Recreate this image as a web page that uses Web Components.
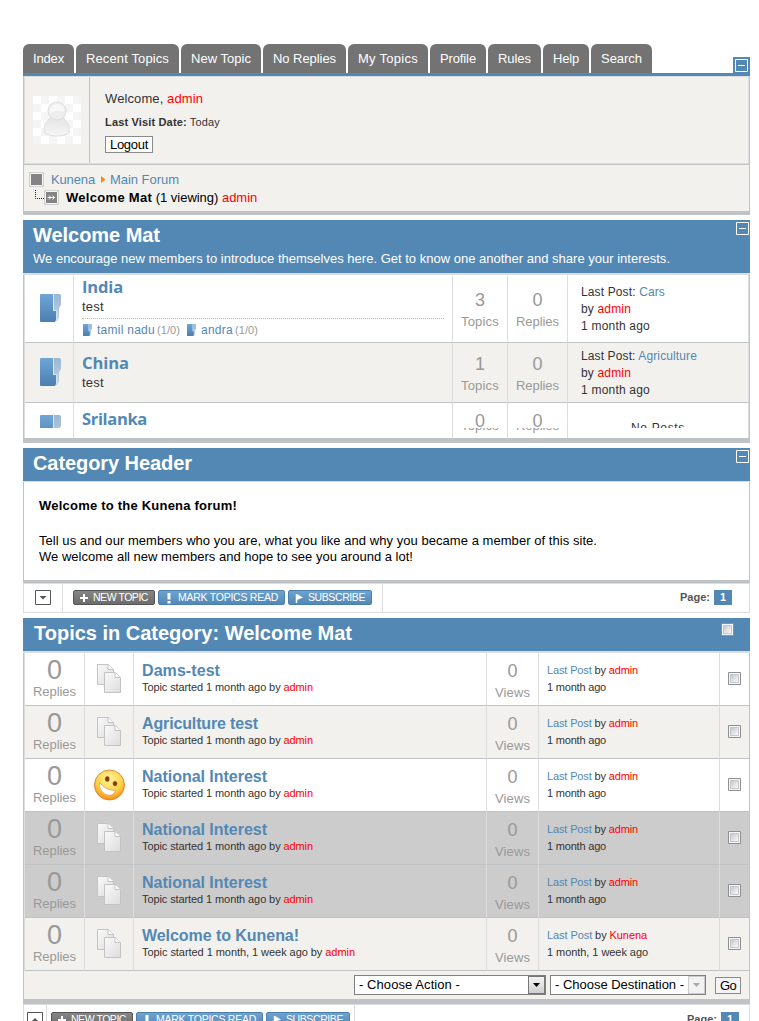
<!DOCTYPE html>
<html lang="en">
<head>
<meta charset="utf-8">
<title>Kunena - Welcome Mat</title>
<style>
html,body{margin:0;padding:0;background:#fff}
body{font:13px "Liberation Sans",Arial,sans-serif;color:#333;height:1021px;overflow:hidden}
</style>
</head>
<body>
<forum-page></forum-page>
<script>
const esc = 'a{color:#5388b4;text-decoration:none}i{color:#f00;font-style:normal}*{box-sizing:border-box}';
function make(name, render) {
  customElements.define(name, class extends HTMLElement {
    constructor() { super(); this.attachShadow({mode: 'open'}); }
    connectedCallback() { this.shadowRoot.innerHTML = render(this, n => this.getAttribute(n) || ''); }
  });
}

make('forum-page', () => `<style>${esc}
:host{display:block;width:727px;margin-left:23px;padding-top:44px;height:1021px;overflow:hidden;box-sizing:border-box}
.gap{height:5px}
.cat{border:solid #bfc3c6;border-width:0 1px 3px;height:101px;padding:15px 15px 0;color:#000}
.cat div{line-height:17px;height:16px}
.cat .b{font-weight:bold;margin-bottom:19px}
.list{border:solid #bfc3c6;border-width:0 1px 5px}
.foot{height:28px;background:#f2f1ed;display:flex;padding:4px 8px 0 330px;color:#000}
.sel{height:20px;border:1px solid #7f7f7f;background:#fff;display:flex;padding-left:4px;line-height:18px;justify-content:space-between}
.arr{width:17px;border:1px solid #777;background:linear-gradient(#f4f4f4,#cfcfcf);display:flex;align-items:center;justify-content:center}
.off{border-color:#ccc;background:#f2f2f2}
.go{width:26px;height:17px;margin:2px 0 0 9px;border:1px solid #8a8a8a;background:#f4f4f4;line-height:15px;padding-left:4px}
</style>
<nav-tabs></nav-tabs>
<profile-box></profile-box>
<div class="gap"></div>
<block-head toggle>Welcome Mat|127|We encourage new members to introduce themselves here. Get to know one another and share your interests.|637</block-head>
<div class="list">
<forum-row h="68" top="1" dt="15" lt="9" ft="19" name="India" nw="41" last="Cars" lw="84" topics="3" subs></forum-row>
<forum-row h="60" top="9" dt="11" lt="5" ft="15" name="China" nw="47" last="Agriculture" lw="116" topics="1" alt></forum-row>
<forum-row h="35" top="5" dt="8" lt="17" ft="12" name="Srilanka" nw="65" topics="0" cut></forum-row>
</div>
<div class="gap"></div>
<block-head toggle thin>Category Header|159</block-head>
<div class="cat">
<div class="b"><fit-text w="198">Welcome to the Kunena forum!</fit-text></div>
<div><fit-text w="558">Tell us and our members who you are, what you like and why you became a member of this site.</fit-text></div>
<div><fit-text w="374">We welcome all new members and hope to see you around a lot!</fit-text></div>
</div>
<tool-bar></tool-bar>
<div class="gap"></div>
<block-head check>Topics in Category: Welcome Mat|318</block-head>
<div class="list">
<topic-row name="Dams-test" nw="78"></topic-row>
<topic-row name="Agriculture test" nw="116" alt></topic-row>
<topic-row name="National Interest" nw="125" smile></topic-row>
<topic-row name="National Interest" nw="125" moved></topic-row>
<topic-row name="National Interest" nw="125" moved></topic-row>
<topic-row name="Welcome to Kunena!" nw="157" alt age="1 month, 1 week ago" sw="213" by="Kunena" bw="100" aw="101"></topic-row>
<div class="foot">
<div class="sel" style="width:192px"><fit-text w="101">- Choose Action -</fit-text><span class="arr"><svg width="7" height="4"><path d="M0 0h7L3.5 4z" fill="#000"/></svg></span></div>
<div class="sel" style="width:156px;margin-left:4px"><fit-text w="129">- Choose Destination -</fit-text><span class="arr off"><svg width="7" height="4"><path d="M0 0h7L3.5 4z" fill="#aaa"/></svg></span></div>
<div class="go"><fit-text w="16">Go</fit-text></div>
</div>
</div>
<tool-bar up></tool-bar>`);

make('nav-tabs', () => {
  const tabs = [['Index',51,31],['Recent Topics',103,83],['New Topic',80,60],['No Replies',83,63],['My Topics',80,60],['Profile',56,36],['Rules',53,33],['Help',46,26],['Search',61,41]];
  return `<style>${esc}
:host{display:flex;height:32px;border-bottom:3px solid #5388b4;box-sizing:border-box;gap:2px;position:relative}
span{height:29px;background:#737373;border-radius:6px 6px 0 0;color:#fff;line-height:29px;display:flex;justify-content:center}
.m{margin:13px 0 0 auto;width:17px;height:16px;background:#5388b4;padding:2px}
</style>${tabs.map(t => `<span style="width:${t[1]}px"><fit-text w="${t[2]}">${t[0]}</fit-text></span>`).join('')}<div class="m"><min-box></min-box></div>`;
});

make('min-box', () => `<style>:host{display:block;width:13px;height:13px}svg{display:block}</style>
<svg width="13" height="13"><path d="M.5.5h12v12H.5zM3 6.5h7" fill="none" stroke="#fff"/></svg>`);

make('profile-box', () => {
  let squares = '';
  for (let y = 0; y < 6; y++) for (let x = 0; x < 6; x++) if ((x + y) % 2) squares += `<path d="M${x*8} ${y*8}h8v8h-8z"/>`;
  return `<style>${esc}
:host{display:block;border:solid #bfc3c6;border-width:0 1px 4px;background:#f2f1ed}
.top{display:flex;height:88px;border:1px solid #ddd}
.pic{width:65px;border-right:1px solid #bfc3c6;padding:19px 0 0 8px}
.info{padding:13px 0 0 15px}
.info div{line-height:17px;height:17px}
.info .v{font-size:11px;margin:7px 0 4px;height:17px}
.info .out{width:48px;height:17px;line-height:15px;border:1px solid #8a8a8a;background:#fff;color:#000;padding-left:4px;margin-top:5px}
.bread{border-top:1px solid #bfc3c6;height:47px;padding:5px 0 0 5px}
.l{display:flex;height:18px;align-items:center}
.l svg{flex:none}
.l fit-text{line-height:18px;padding-top:1px}
</style>
<div class="top"><div class="pic"><svg width="48" height="48"><defs><linearGradient id="g" x2="0" y2="1"><stop stop-color="#e6e6e6"/><stop offset="1" stop-color="#f5f5f5"/></linearGradient></defs><path d="M0 0h48v48H0z" fill="#fff"/><g fill="#f5f5f5">${squares}</g><path d="M17 22C10 28 11 34 12 37c4 4 20 4 24 0 1-4 0-10-6-15z" fill="url(#g)" stroke="#dedede"/><circle cx="24" cy="15" r="9" fill="#eee" stroke="#dedede"/><path d="M17 12q8-8 14 0v4q-7-3-14 1z" fill="#f8f8f8"/></svg></div>
<div class="info"><div><fit-text w="98">Welcome, <i>admin</i></fit-text></div>
<div class="v"><fit-text w="115"><b>Last Visit Date:</b> Today</fit-text></div>
<div class="out"><fit-text w="38">Logout</fit-text></div></div></div>
<div class="bread">
<div class="l"><svg width="15" height="15"><path d="M.5.5h14v14H.5z" fill="#848484" stroke="#d2d2d2"/><path d="M1.5 1.5h12v12h-12z" fill="none" stroke="#f5f5f5"/></svg><a style="margin-left:7px"><fit-text w="44">Kunena</fit-text></a><svg width="5" height="7" style="margin:1px 4px 0 6px"><path d="M0 0l4.5 3.5L0 7z" fill="#ff8a00"/></svg><a><fit-text w="69">Main Forum</fit-text></a></div>
<div class="l" style="color:#000;padding-left:6px"><svg width="24" height="15"><path d="M.5 0v8.5h9" fill="none" stroke="#222" stroke-dasharray="1 1"/><path d="M9.500 .5h14v14h-14z" fill="#848484" stroke="#d2d2d2"/><path d="M10.500 1.500h12v12h-12z" fill="none" stroke="#f5f5f5"/><path d="M12.500 7.500h7M14 5.500l2 2-2 2M17.500 5.500l2 2-2 2" fill="none" stroke="#fff"/></svg><fit-text w="191" style="margin-left:7px"><b style="letter-spacing:.3px">Welcome Mat</b> (1 viewing) <i>admin</i></fit-text></div>
</div>`;
});

make('block-head', (el) => {
  const [t, tw, d, dw] = el.textContent.split('|');
  const chk = el.hasAttribute('check');
  return `<style>${esc}
:host{display:block;background:#5388b4;color:#fff;border-bottom:${el.hasAttribute('thin') ? 1 : 2}px solid #ddd}
.h{display:flex;justify-content:space-between;padding:3px ${chk ? 16 : 1}px 0 10px;height:${d ? 53 : 33}px}
.t{font-weight:bold;font-size:20px;line-height:24px}
.d{line-height:17px;margin-top:3px}
min-box{margin-top:-1px}
check-box{margin-top:2px}
</style><div class="h"><div><div class="t"><fit-text w="${tw}" style="${chk ? 'margin-left:1px' : ''}">${t}</fit-text></div>${d ? `<div class="d"><fit-text w="${dw}">${d}</fit-text></div>` : ''}</div>${chk ? '<check-box></check-box>' : '<min-box></min-box>'}</div>`;
});

make('check-box', () => `<style>:host{display:block;width:13px;height:13px}svg{display:block}</style>
<svg width="13" height="13"><defs><linearGradient id="c" x2="1" y2="1"><stop stop-color="#bfc3cb"/><stop offset="1" stop-color="#fff"/></linearGradient></defs><path d="M.5.5h12v12H.5z" fill="#f6f6f6" stroke="#8e8f8f"/><path d="M2.500 2.500h8v8h-8z" fill="url(#c)" stroke="#c4c6ca"/></svg>`);

make('folder-icon', (el, a) => {
  const s = a('size') === 's';
  return `<style>:host{display:inline-block;width:${s ? 9 : 21}px;height:${s ? 12 : 28}px}svg{display:block}</style>
<svg width="100%" height="100%" viewBox="0 0 21 28" preserveAspectRatio="none"><defs><linearGradient id="f" x2="0" y2="1"><stop stop-color="#70a5d7"/><stop offset="1" stop-color="#4a80b0"/></linearGradient><linearGradient id="b" x2="0" y2="1"><stop stop-color="#98b6d2"/><stop offset="1" stop-color="#c3d3e2"/></linearGradient></defs><path d="M13 0h6q2 0 2 2v9l-2 3v10l-2 3h-1V17h-3z" fill="url(#b)"/><path d="M13.500 0v16.500h3.300V26" stroke="#dbe7f2" fill="none"/><path d="M1 0h12v17h3v9l-1 2H1q-1 0-1-1V1q0-1 1-1z" fill="url(#f)"/></svg>`;
});

make('forum-row', (el, a) => {
  const cut = el.hasAttribute('cut');
  const stat = (n, label, w) => `<div class="c n"><div class="d">${n}</div><div class="k"><fit-text w="${w}">${label}</fit-text></div></div>`;
  return `<style>${esc}
:host{display:grid;grid-template-columns:49px 379px 55px 60px 181px;height:${a('h')}px;box-sizing:border-box;border-left:1px solid #ddd;background:${el.hasAttribute('alt') ? '#f2f1ed' : '#fff'}}
.c{border-right:1px solid #ddd;border-bottom:${cut ? 0 : 1}px solid #bfc3c6;min-width:0;height:100%}
.f{padding:${a('ft')}px 0 0 15px}
.f folder-icon{${cut ? 'clip-path:inset(0 0 15px 0);margin-bottom:-15px' : ''}}
.m{padding:${a('top')}px 8px 0 8px}
.name{font:bold 16.5px/22px "Open Sans","Noto Sans",sans-serif;height:22px}
.test{line-height:17px}
.subs{border-top:1px dotted #cdbf92;margin-top:3px;padding-top:3px;display:flex;font-size:12px;line-height:16px;align-items:center}
.subs small{font-size:11px;color:#999;margin:0 6px 0 2px}
.subs folder-icon{margin:0 5px 0 1px;flex:none}
.n{padding-top:${a('dt')}px;text-align:center;color:#999}
.d{font-size:18px;line-height:20px;height:20px;margin-bottom:3px}
.k{line-height:17px;height:17px;${cut ? 'margin-top:-17px;clip-path:inset(11px 0 0 0)' : ''}}
.l{padding:${a('lt')}px 0 0 13px;font-size:12px;line-height:17px}
.l div{height:17px;line-height:16px}
</style>
<div class="c f"><folder-icon></folder-icon></div>
<div class="c m"><div class="name"><a><fit-text w="${a('nw')}">${a('name')}</fit-text></a></div>${cut ? '' : '<div class="test"><fit-text w="22">test</fit-text></div>'}
${el.hasAttribute('subs') ? '<div class="subs"><folder-icon size="s"></folder-icon><a><fit-text w="58">tamil nadu</fit-text></a><small><fit-text w="23">(1/0)</fit-text></small><folder-icon size="s"></folder-icon><a><fit-text w="32">andra</fit-text></a><small><fit-text w="23">(1/0)</fit-text></small></div>' : ''}</div>
${stat(a('topics'), 'Topics', 38)}${stat('0', 'Replies', 43)}
<div class="c l">${cut ? '<div style="padding-left:50px;clip-path:inset(0 0 9px 0)"><fit-text w="54">No Posts</fit-text></div>' : `<div><fit-text w="${a('lw')}">Last Post: <a>${a('last')}</a></fit-text></div><div><fit-text w="50">by <i>admin</i></fit-text></div><div><fit-text w="69">1 month ago</fit-text></div>`}</div>`;
});

make('topic-row', (el, a) => {
  const bg = el.hasAttribute('moved') ? '#ccc' : el.hasAttribute('alt') ? '#f2f1ed' : '#fff';
  const age = a('age') || '1 month ago', by = a('by') || 'admin';
  const docs = `<svg width="25" height="29" style="margin:11px 0 0 12px"><defs><linearGradient id="d" x2="1" y2="1"><stop stop-color="#fafafa"/><stop offset="1" stop-color="#dcdcdc"/></linearGradient></defs><g fill="url(#d)" stroke="#c3c3c3"><path d="M.5.5h11l5 5v15H.5z"/><path d="M11 .5v5h5.500" fill="#fff"/><path d="M7.500 8.500h11l5 5v15h-16z"/><path d="M18 8.500v5h5.500" fill="#fff"/></g></svg>`;
  const smile = `<svg width="32" height="32" style="margin:10px 0 0 9px"><defs><radialGradient id="s" cx=".5" cy=".3" r=".75"><stop stop-color="#fff3a0"/><stop offset=".55" stop-color="#ffd548"/><stop offset="1" stop-color="#f5820a"/></radialGradient></defs><circle cx="15.500" cy="16" r="15" fill="url(#s)" stroke="#d9702a" stroke-width=".8"/><ellipse cx="13.300" cy="10" rx="2.200" ry="2.800" fill="#8a3c05"/><ellipse cx="21" cy="14.500" rx="2.200" ry="2.600" fill="#8a3c05"/><path d="M5.500 13.500C9 18 15 21.500 21.500 21.500c-1 4-5 6-9.500 4S5 19 5.500 13.500z" fill="#fff" stroke="#d7a065" stroke-width=".8"/></svg>`;
  return `<style>${esc}
:host{display:grid;grid-template-columns:60px 49px 353px 52px 181px 29px;height:53px;box-sizing:border-box;border-left:1px solid #ddd;background:${bg}}
.c{border-right:1px solid #ddd;border-bottom:1px solid #bfc3c6;min-width:0;height:53px}
svg{display:block}
.c:last-child{border-right:0}
.n{text-align:center;color:#999}
.big{font-size:27px;line-height:27px;height:26px;padding-right:1px}
.k{line-height:17px;height:17px}
.d{font-size:18px;line-height:20px;height:20px;margin-bottom:3px}
.t{font-weight:bold;font-size:16px;line-height:20px;height:19px}
.s{font-size:11px;line-height:14px;height:14px}
.l div{font-size:11px;line-height:16px;height:17px}
</style>
<div class="c n" style="padding-top:4px"><div class="big"><fit-text w="14">0</fit-text></div><div class="k"><fit-text w="43">Replies</fit-text></div></div>
<div class="c">${el.hasAttribute('smile') ? smile : docs}</div>
<div class="c" style="padding:8px 0 0 8px"><div class="t"><a><fit-text w="${a('nw')}">${a('name')}</fit-text></a></div><div class="s"><fit-text w="${a('sw') || 171}">Topic started ${age} by <i>admin</i></fit-text></div></div>
<div class="c n" style="padding-top:8px"><div class="d">0</div><div class="k"><fit-text w="35">Views</fit-text></div></div>
<div class="c l" style="padding:9px 0 0 8px"><div><fit-text w="${a('bw') || 91}"><a>Last Post</a> by <i>${by}</i></fit-text></div><div><fit-text w="${a('aw') || 59}">${age}</fit-text></div></div>
<div class="c" style="padding:19px 0 0 8px"><check-box></check-box></div>`;
});

make('tool-bar', (el) => {
  const up = el.hasAttribute('up');
  const icons = {plus: '<path d="M4 0v8M0 4h8" stroke-width="2"/>', bang: '<path d="M4 -1v6.500M4 7v2.500" stroke-width="3"/>', flag: '<path d="M1.500 0v9" stroke-width="1.500"/><path d="M2 0l6 3.500L2 6z" fill="#fff" stroke="none"/>'};
  const btn = (cls, icon, w, tw, label) => `<div class="btn ${cls}" style="width:${w}px"><svg width="9" height="10" fill="none" stroke="#fff" overflow="visible">${icons[icon]}</svg><fit-text w="${tw}">${label}</fit-text></div>`;
  return `<style>${esc}
:host{display:flex;height:30px;box-sizing:border-box;border:1px solid #ddd}
.go{width:${up ? 23 : 39}px;border-right:1px solid #ddd;padding:${up ? '7px 0 0 3px' : '6px 0 0 11px'}}
.go svg{display:block}
.acts{display:flex;width:${up ? 308 : 320}px;border-right:1px solid #ddd;gap:3px;padding:${up ? '7px 0 0 4px' : '6px 0 0 10px'}}
.btn{height:15px;border:1px solid #4b7fad;border-radius:2px;background:linear-gradient(#6ea2d2,#5388b4);color:#fff;font-size:10.5px;line-height:13px;display:flex;padding-left:6px;flex:none}
.btn svg{flex:none;margin:3px 4px 0 0}
.grey{background:linear-gradient(#858585,#6c6c6c);border-color:#555}
.pg{margin-left:auto;display:flex;font-weight:bold;font-size:11px;line-height:15px;color:#555;padding:${up ? '7px 10px 0 0' : '6px 17px 0 0'}}
.one{width:18px;height:15px;background:#5388b4;color:#fff;text-align:center;margin-left:4px}
</style>
<div class="go"><svg width="16" height="15"><path d="M.5.5h15v14H.5z" fill="#fff" stroke="#555"/><path d="${up ? 'M4.500 9.500h7L8 6z' : 'M4.500 6h7L8 9.500z'}" fill="#555"/></svg></div>
<div class="acts">${btn('grey', 'plus', 82, 55, 'NEW TOPIC')}${btn('', 'bang', 127, 100, 'MARK TOPICS READ')}${btn('', 'flag', 84, 57, 'SUBSCRIBE')}</div>
<div class="pg"><fit-text w="30">Page:</fit-text><span class="one">1</span></div>`;
});

/* A run of text whose tracking is adjusted so that it takes the width given in "w". */
customElements.define('fit-text', class extends HTMLElement {
  connectedCallback() {
    if (this.shadowRoot) return;
    this.attachShadow({mode: 'open'}).innerHTML = '<style>:host{display:inline-block;white-space:nowrap;vertical-align:top}</style><slot></slot>';
    const w = +this.getAttribute('w');
    const n = this.textContent.length;
    this.style.letterSpacing = (w - this.getBoundingClientRect().width) / n + 'px';
    this.style.width = w + 'px';
  }
});
</script>
</body>
</html>
